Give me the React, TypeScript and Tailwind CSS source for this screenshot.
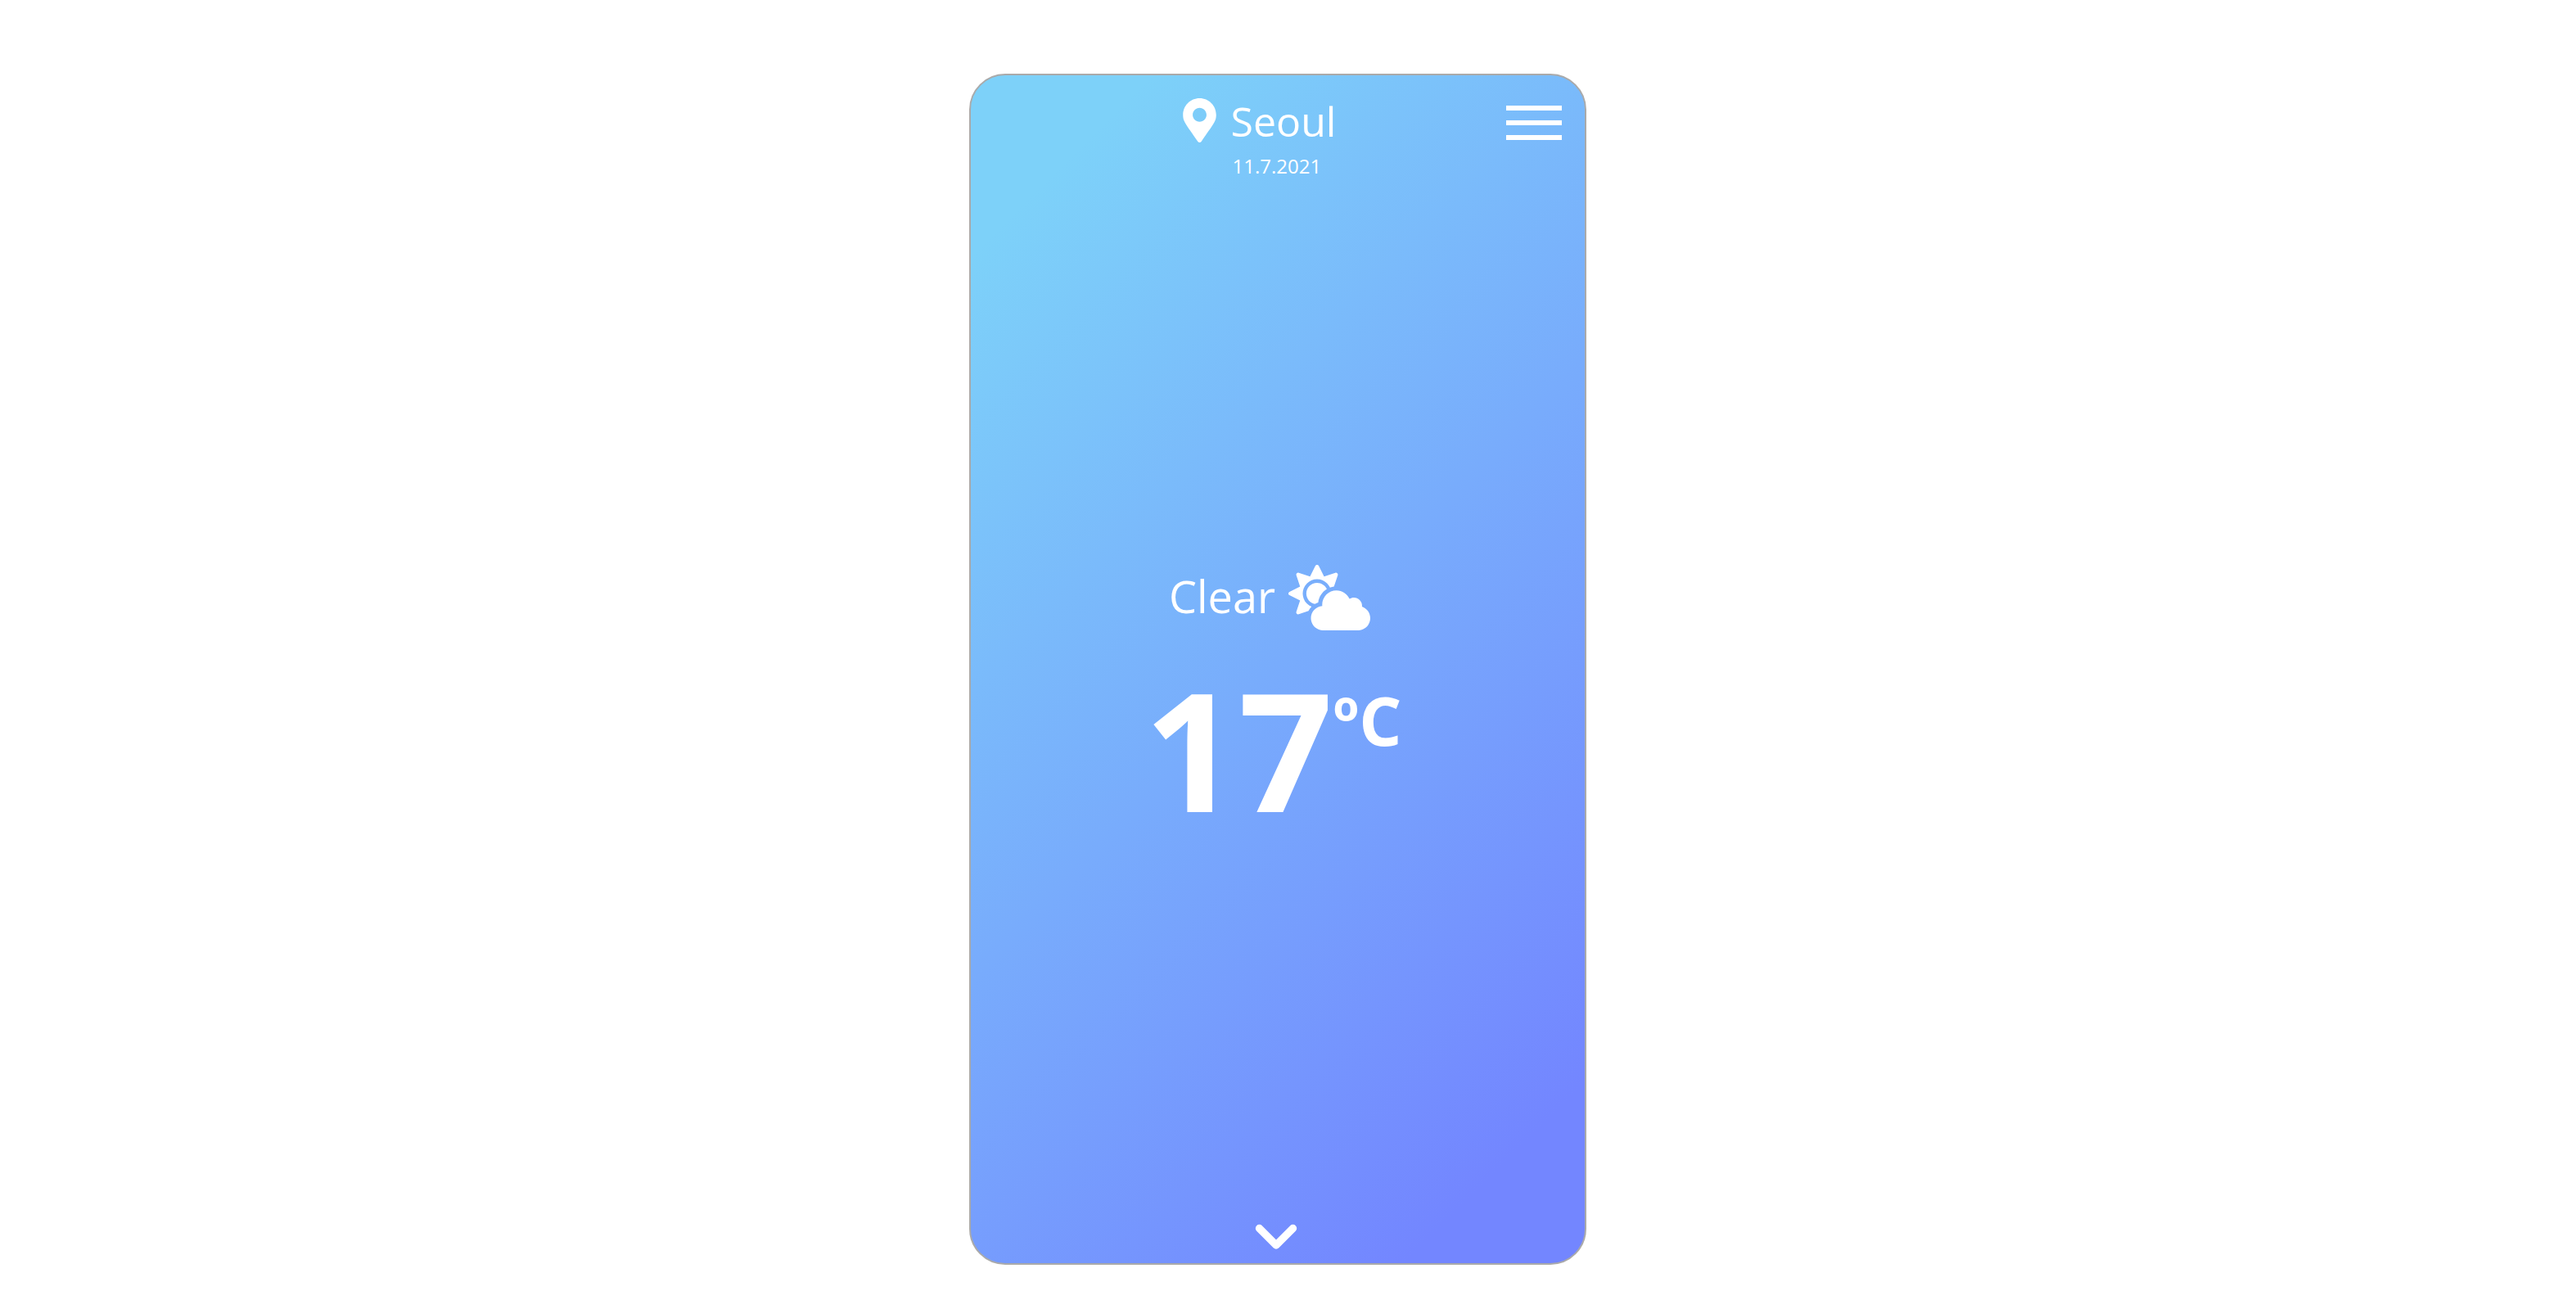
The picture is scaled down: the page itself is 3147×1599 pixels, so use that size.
import React from "react";
import { FaMapMarkerAlt, FaCloudSun } from "react-icons/fa";

function Header() {
  return (
    <header className="grid grid-cols-[1fr_auto_1fr] items-start pt-5 pl-3">
      <FaMapMarkerAlt className="mt-2 mr-4 h-[54px] w-[41px] justify-self-end" />
      <div className="pl-0.5">
        <h1 className="text-[50px] leading-[72px] font-normal">Seoul</h1>
        <p className="pl-0.5 text-[24px] leading-[38px]">11.7.2021</p>
      </div>
      <button type="button" aria-label="Menu" className="mt-[17px] mr-7 flex w-[68px] flex-col gap-3 justify-self-end">
        <span className="h-[6px] bg-white" />
        <span className="h-[6px] bg-white" />
        <span className="h-[6px] bg-white" />
      </button>
    </header>
  );
}

function Conditions() {
  return (
    <section className="flex flex-1 flex-col items-center pt-[466px] pr-2">
      <div className="flex items-center gap-4 pr-3">
        <span className="pb-1 text-[54px] leading-[80px] font-normal">Clear</span>
        <FaCloudSun className="h-20 w-[100px]" />
      </div>
      <div className="mt-8 flex items-start pr-1 font-bold">
        <span className="text-[202px] leading-[220px]">17</span>
        <span className="mt-5 text-[82px] leading-[110px]">ºC</span>
      </div>
    </section>
  );
}

function ChevronDown() {
  return (
    <svg viewBox="0 0 52 32" className="h-8 w-[52px]" fill="none" stroke="currentColor" strokeWidth="9.4" strokeLinecap="round" strokeLinejoin="round" aria-hidden="true">
      <path d="M5.5 5.5 L26 26 L46.5 5.5" />
    </svg>
  );
}

export default function App() {
  return (
    <div className="flex min-h-screen justify-center bg-white pt-[90px] pb-[54px] pr-[25px]">
      <main className="flex w-[754px] flex-col rounded-[44px] border-2 border-[#aaaaaa] bg-[linear-gradient(135deg,#7dd1f9_10%,#7386ff_90%)] font-['Open_Sans','Noto_Sans',sans-serif] text-white">
        <Header />
        <Conditions />
        <button type="button" aria-label="Show more" className="mb-4 self-center pr-1">
          <ChevronDown />
        </button>
      </main>
    </div>
  );
}
